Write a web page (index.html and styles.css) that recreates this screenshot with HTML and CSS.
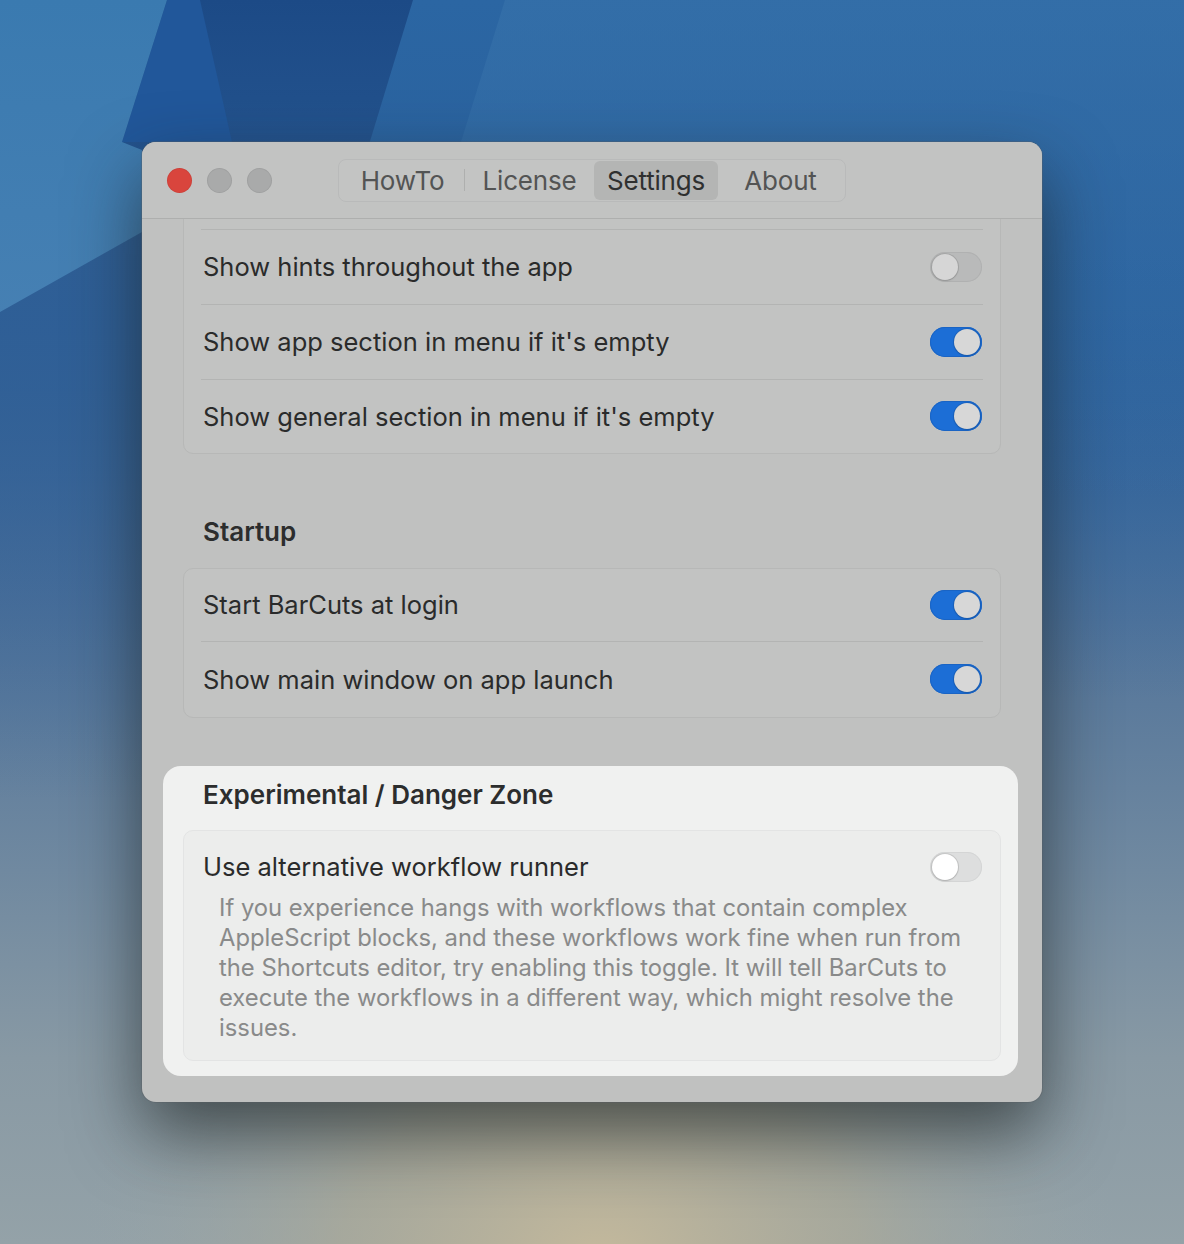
FILE: index.html
```html
<!DOCTYPE html>
<html lang="en">
<head>
<meta charset="utf-8">
<title>BarCuts Settings</title>
<link rel="stylesheet" href="styles.css">
</head>
<body>
<svg class="wallpaper" width="1184" height="1244" viewBox="0 0 1184 1244" preserveAspectRatio="none" aria-hidden="true">
  <defs>
    <linearGradient id="base" x1="0" y1="0" x2="0" y2="1244" gradientUnits="userSpaceOnUse">
      <stop offset="0" stop-color="#1c4a86"/>
      <stop offset="0.25" stop-color="#2c5d96"/>
      <stop offset="0.5" stop-color="#52749a"/>
      <stop offset="0.7" stop-color="#7089a0"/>
      <stop offset="0.85" stop-color="#8899a4"/>
      <stop offset="1" stop-color="#94a2a8"/>
    </linearGradient>
    <linearGradient id="rightzone" x1="0" y1="0" x2="0" y2="700" gradientUnits="userSpaceOnUse">
      <stop offset="0" stop-color="#2b66a3" stop-opacity="1"/>
      <stop offset="0.45" stop-color="#2c64a0" stop-opacity="0.8"/>
      <stop offset="1" stop-color="#2c64a0" stop-opacity="0"/>
    </linearGradient>
    <linearGradient id="rightlight" x1="0" y1="0" x2="0" y2="500" gradientUnits="userSpaceOnUse">
      <stop offset="0" stop-color="#3873ab" stop-opacity="0.6"/>
      <stop offset="1" stop-color="#3873ab" stop-opacity="0"/>
    </linearGradient>
    <linearGradient id="leftlight" x1="0" y1="0" x2="0" y2="320" gradientUnits="userSpaceOnUse">
      <stop offset="0" stop-color="#3a7ab0"/>
      <stop offset="1" stop-color="#4680b3"/>
    </linearGradient>
    <linearGradient id="leftlow" x1="0" y1="230" x2="0" y2="800" gradientUnits="userSpaceOnUse">
      <stop offset="0" stop-color="#2f5f96" stop-opacity="1"/>
      <stop offset="1" stop-color="#2f5f96" stop-opacity="0"/>
    </linearGradient>
    <radialGradient id="glow" cx="600" cy="1260" r="520" gradientUnits="userSpaceOnUse" gradientTransform="translate(600 1260) scale(1 0.75) translate(-600 -1260)">
      <stop offset="0" stop-color="#c4b99c" stop-opacity="1"/>
      <stop offset="0.5" stop-color="#aeab98" stop-opacity="0.7"/>
      <stop offset="1" stop-color="#97a4a8" stop-opacity="0"/>
    </radialGradient>
  </defs>
  <rect x="0" y="0" width="1184" height="1244" fill="url(#base)"/>
  <polygon points="0,230 200,230 200,800 0,800" fill="url(#leftlow)"/>
  <polygon points="413,0 1184,0 1184,700 200,700" fill="url(#rightzone)"/>
  <polygon points="505,0 1184,0 1184,500 350,500" fill="url(#rightlight)"/>
  <polygon points="167,0 200,0 232,142 122,142" fill="#21579a"/>
  <polygon points="0,0 167,0 122,142 142,150 142,232 0,312" fill="url(#leftlight)"/>
  <rect x="0" y="0" width="1184" height="1244" fill="url(#glow)"/>
</svg>

<main class="window">
  <header class="titlebar">
    <div class="lights">
      <span class="light light-close"></span>
      <span class="light light-off"></span>
      <span class="light light-off"></span>
    </div>
    <nav class="segmented">
      <span class="seg seg-howto">HowTo</span>
      <span class="seg-divider"></span>
      <span class="seg seg-license">License</span>
      <span class="seg seg-active">Settings</span>
      <span class="seg seg-about">About</span>
    </nav>
  </header>

  <section class="content">
    <div class="card card-top">
      <div class="row row-clipped"></div>
      <div class="row">
        <span class="label">Show hints throughout the app</span>
        <span class="toggle"><span class="knob"></span></span>
      </div>
      <div class="row">
        <span class="label">Show app section in menu if it's empty</span>
        <span class="toggle toggle-on"><span class="knob"></span></span>
      </div>
      <div class="row">
        <span class="label">Show general section in menu if it's empty</span>
        <span class="toggle toggle-on"><span class="knob"></span></span>
      </div>
    </div>

    <h2 class="section-title">Startup</h2>
    <div class="card card-startup">
      <div class="row">
        <span class="label">Start BarCuts at login</span>
        <span class="toggle toggle-on"><span class="knob"></span></span>
      </div>
      <div class="row">
        <span class="label">Show main window on app launch</span>
        <span class="toggle toggle-on"><span class="knob"></span></span>
      </div>
    </div>

    <div class="danger">
      <h2 class="section-title danger-title">Experimental / Danger Zone</h2>
      <div class="card card-light">
        <div class="row row-runner">
          <span class="label">Use alternative workflow runner</span>
          <span class="toggle toggle-light"><span class="knob"></span></span>
        </div>
        <p class="description">If you experience hangs with workflows that contain complex AppleScript blocks, and these workflows work fine when run from the Shortcuts editor, try enabling this toggle. It will tell BarCuts to execute the workflows in a different way, which might resolve the issues.</p>
      </div>
    </div>
  </section>
</main>
</body>
</html>
```

FILE: styles.css
```css
* {
  box-sizing: border-box;
}

html, body {
  margin: 0;
  padding: 0;
}

body {
  width: 1184px;
  height: 1244px;
  overflow: hidden;
  position: relative;
  font-family: "Inter", "Noto Sans", "Liberation Sans", sans-serif;
  color: #2b2b2b;
  background: #5d7d9e;
}

.wallpaper {
  position: absolute;
  left: 0;
  top: 0;
  z-index: 0;
}

.window {
  position: relative;
  z-index: 1;
  margin: 142px 0 0 142px;
  width: 900px;
  height: 960px;
  border-radius: 14px;
  background: #c0c1c0;
  box-shadow: 0 0 0 1px rgba(90, 95, 100, 0.35), 0 32px 70px rgba(25, 30, 30, 0.65);
  overflow: hidden;
  display: flex;
  flex-direction: column;
}

/* Title bar */
.titlebar {
  height: 77px;
  flex: none;
  display: flex;
  align-items: center;
  padding-left: 25px;
  background: #c2c3c2;
  border-bottom: 1px solid #aeafae;
}

.lights {
  display: flex;
  gap: 15px;
}

.light {
  width: 25px;
  height: 25px;
  border-radius: 50%;
  background: #a9aaaa;
  box-shadow: inset 0 0 0 1px rgba(0, 0, 0, 0.06);
}

.light-close {
  background: #d9453d;
}

.segmented {
  margin-left: 66px;
  width: 508px;
  height: 43px;
  display: flex;
  align-items: center;
  border-radius: 8px;
  border: 1px solid #b9baba;
  background: #c3c4c3;
  padding: 0 2px;
}

.seg {
  font-size: 26px;
  color: #535454;
  display: flex;
  align-items: center;
  justify-content: center;
  height: 39px;
  letter-spacing: -0.2px;
  flex: none;
}

.seg-howto { width: 123px; }
.seg-license { width: 129px; }
.seg-active {
  width: 124px;
  background: #b4b5b4;
  border-radius: 6px;
  color: #2f3030;
}
.seg-about { width: 125px; }

.seg-divider {
  width: 1px;
  height: 22px;
  background: #aeafae;
  flex: none;
}

/* Content */
.content {
  flex: 1;
  overflow: hidden;
  padding: 0 41px;
}

.card {
  border: 1px solid #b7b8b7;
  border-radius: 10px;
  background: #c2c3c2;
  padding: 0 17px;
}

.card-top {
  margin-top: -10px;
}

.row {
  display: flex;
  align-items: center;
  justify-content: space-between;
  min-height: 75px;
  padding: 0 1px 0 2px;
  border-bottom: 1px solid #b3b4b3;
}

.row:last-child {
  border-bottom: none;
  min-height: 75px;
}

.card-top .row:last-child {
  min-height: 73px;
}

.card-startup .row:first-child {
  min-height: 73px;
}

.row-clipped {
  min-height: 19.5px;
  height: 19.5px;
}

.label {
  font-size: 25.5px;
  color: #2a2b2b;
}

.section-title {
  margin: 63px 0 21px;
  padding-left: 20px;
  font-size: 26px;
  line-height: 30px;
  font-weight: 600;
  color: #2c2d2d;
}

/* Toggles */
.toggle {
  position: relative;
  width: 52px;
  height: 30px;
  border-radius: 15px;
  background: #b9baba;
  box-shadow: inset 0 0 0 1px #b0b1b1;
  flex: none;
}

.toggle .knob {
  position: absolute;
  top: 2px;
  left: 2px;
  width: 26px;
  height: 26px;
  border-radius: 50%;
  background: #d6d6d6;
  box-shadow: 0 0 0 1px rgba(0, 0, 0, 0.1), 0 1px 2px rgba(0, 0, 0, 0.12);
}

.toggle-on {
  background: #1c6ed6;
  box-shadow: inset 0 0 0 1px #1a64c4;
}

.toggle-on .knob {
  left: 24px;
  background: #d7d7d7;
}

.toggle-light {
  background: #dddede;
  box-shadow: inset 0 0 0 1px #d4d5d5;
}

.toggle-light .knob {
  background: #ffffff;
}

/* Danger zone */
.danger {
  margin: 48px -17px 0 -20px;
  padding: 14px 17px 15px 20px;
  background: #f0f1f0;
  border-radius: 18px;
}

.danger-title {
  margin: 0 0 20px;
}

.card-light {
  background: #ecedec;
  border-color: #e3e4e4;
  padding-bottom: 17px;
}

.card-light .row-runner {
  min-height: 62px;
  padding-top: 10px;
  border-bottom: none;
}

.description {
  margin: 0 0 0 18px;
  font-size: 23.8px;
  line-height: 30px;
  color: #898a8a;
}
```
